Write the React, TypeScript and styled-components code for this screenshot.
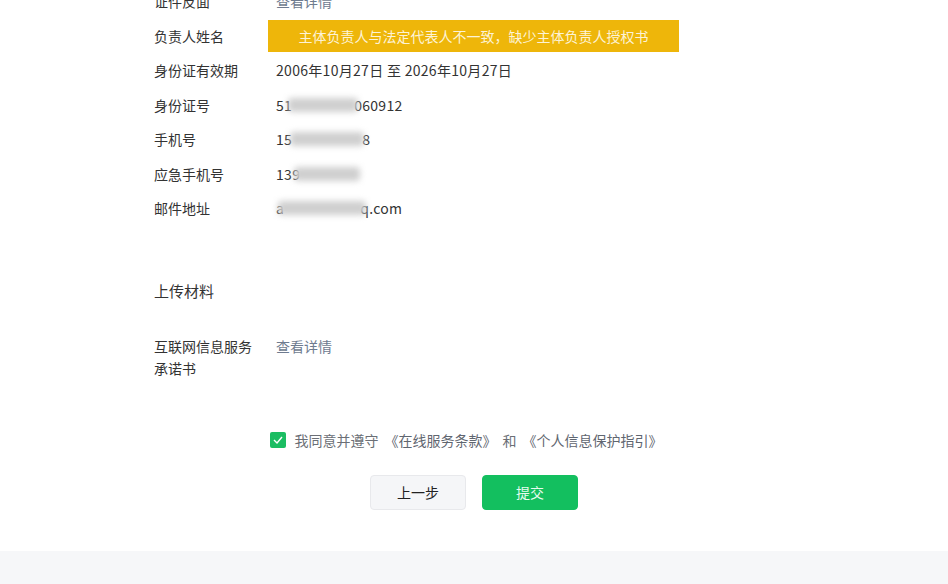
import styled, { createGlobalStyle } from 'styled-components';

const GlobalStyle = createGlobalStyle`
  html, body {
    margin: 0;
    padding: 0;
    background: #fff;
    font-family: "Noto Sans CJK SC", "Noto Sans", sans-serif;
    color: #333;
  }
`;

type Part = { text?: string; blur?: number; shift?: number };

const rows: { label: string; value?: Part[]; link?: boolean; warn?: string }[] = [
  { label: '证件反面', link: true },
  { label: '负责人姓名', warn: '主体负责人与法定代表人不一致，缺少主体负责人授权书' },
  { label: '身份证有效期', value: [{ text: '2006年10月27日 至 2026年10月27日' }] },
  { label: '身份证号', value: [{ text: '51' }, { blur: 70, shift: -4 }, { text: '060912' }] },
  { label: '手机号', value: [{ text: '15' }, { blur: 74, shift: -2 }, { text: '8' }] },
  { label: '应急手机号', value: [{ text: '139' }, { blur: 66, shift: -6 }] },
  { label: '邮件地址', value: [{ text: 'a' }, { blur: 88, shift: -6 }, { text: 'q.com' }] },
];

const App = () => {
  return (
    <>
      <GlobalStyle />
      <Page>
        <Form>
          {rows.map((r) => (
            <Row key={r.label}>
              <Label>{r.label}</Label>
              {r.warn ? (
                <Warning>{r.warn}</Warning>
              ) : r.link ? (
                <Link>查看详情</Link>
              ) : (
                <Value>
                  {r.value?.map((p, i) =>
                    p.blur ? <Blur key={i} $w={p.blur} $shift={p.shift || 0} /> : <span key={i}>{p.text}</span>
                  )}
                </Value>
              )}
            </Row>
          ))}
          <SectionTitle>上传材料</SectionTitle>
          <Row $tall>
            <Label $wrap>互联网信息服务承诺书</Label>
            <Link>查看详情</Link>
          </Row>
        </Form>
        <Agree>
          <Check>
            <svg width="10" height="8" viewBox="0 0 10 8">
              <path d="M1 4l3 3 5-6" stroke="#fff" strokeWidth="1.4" fill="none" />
            </svg>
          </Check>
          <span>我同意并遵守</span>
          <AgreeLink>《在线服务条款》</AgreeLink>
          <span>和</span>
          <AgreeLink>《个人信息保护指引》</AgreeLink>
        </Agree>
        <Actions>
          <Button>上一步</Button>
          <Button $primary>提交</Button>
        </Actions>
      </Page>
      <Footer />
    </>
  );
};
export default App;

const Page = styled.div`
  height: 551px;
  overflow: hidden;
  background: #fff;
`;

const Form = styled.div`
  display: flex;
  flex-direction: column;
  padding-left: 154px;
  margin-top: -16px;
`;

const Row = styled.div<{ $tall?: boolean }>`
  display: flex;
  align-items: ${(p) => (p.$tall ? 'flex-start' : 'center')};
  height: ${(p) => (p.$tall ? '44px' : '34.5px')};
  font-size: 14px;
`;

const Label = styled.div<{ $wrap?: boolean }>`
  width: ${(p) => (p.$wrap ? '100px' : '122px')};
  margin-right: ${(p) => (p.$wrap ? '22px' : '0')};
  flex-shrink: 0;
  color: #333;
  line-height: 22px;
`;

const Value = styled.div`
  display: flex;
  align-items: center;
  color: #333;
  line-height: 20px;
  letter-spacing: 0.3px;
`;

const Link = styled.span`
  color: #6e7b8f;
  line-height: 22px;
`;

const Warning = styled.div`
  margin-left: -8px;
  width: 411px;
  height: 32px;
  background: #eeb60a;
  color: #fdf3d6;
  font-size: 14px;
  display: flex;
  align-items: center;
  justify-content: center;
`;

const Blur = styled.span<{ $w: number; $shift: number }>`
  display: inline-block;
  width: ${(p) => p.$w}px;
  height: 14px;
  margin: 0 ${(p) => p.$shift}px;
  background: #cfcfcf;
  filter: blur(3px);
  border-radius: 4px;
  position: relative;
`;

const SectionTitle = styled.div`
  font-size: 15px;
  color: #333;
  margin-top: 54px;
  margin-bottom: 33px;
  line-height: 22px;
`;

const Agree = styled.div`
  display: flex;
  align-items: center;
  justify-content: center;
  gap: 6px;
  margin-top: 51px;
  margin-left: -16px;
  font-size: 14px;
  color: #6b6f76;
  line-height: 20px;
`;

const Check = styled.span`
  width: 16px;
  height: 16px;
  border-radius: 2px;
  background: #1bbd62;
  display: inline-flex;
  align-items: center;
  justify-content: center;
  margin-right: 3px;
`;

const AgreeLink = styled.span`
  color: #5f6670;
`;

const Actions = styled.div`
  display: flex;
  justify-content: center;
  gap: 16px;
  margin-top: 25px;
`;

const Button = styled.button<{ $primary?: boolean }>`
  width: 96px;
  height: 35px;
  border-radius: 4px;
  font-family: inherit;
  font-size: 14px;
  cursor: pointer;
  border: 1px solid ${(p) => (p.$primary ? '#13bf5f' : '#e8e9ec')};
  background: ${(p) => (p.$primary ? '#13bf5f' : '#f5f6f8')};
  color: ${(p) => (p.$primary ? '#e8fbef' : '#222')};
`;

const Footer = styled.div`
  height: 33px;
  background: #f6f7f9;
`;
